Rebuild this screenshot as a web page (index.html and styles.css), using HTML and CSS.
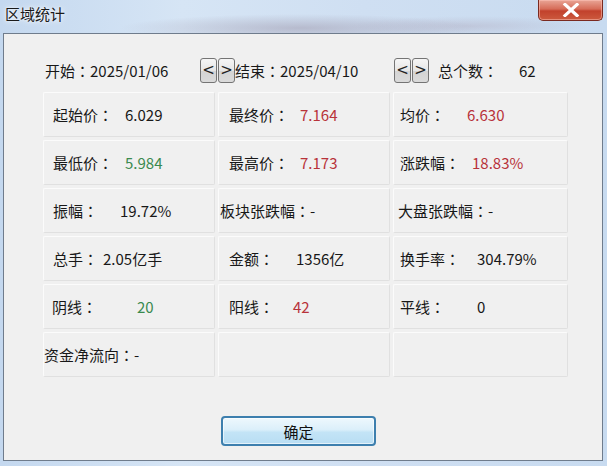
FILE: index.html
```html
<!DOCTYPE html>
<html lang="zh-CN">
<head>
<meta charset="utf-8">
<title>区域统计</title>
<link rel="stylesheet" href="styles.css">
</head>
<body>
<div class="window">
  <div class="titlebar">
    <span class="title">区域统计</span>
    <div class="close" aria-label="关闭">
      <svg width="20" height="14" viewBox="0 0 20 14"><path d="M4 1.5 L16 12.5 M16 1.5 L4 12.5" stroke="#ffffff" stroke-width="3.2" stroke-linecap="square"/></svg>
    </div>
  </div>
  <div class="client">
    <div class="panel">
      <div class="header">
        <span class="h-start">开始<span class="colon" lang="zh-TW">：</span>2025/01/06</span>
        <span class="arrows"><span class="arr">&lt;</span><span class="arr">&gt;</span></span>
        <span class="h-end">结束<span class="colon" lang="zh-TW">：</span>2025/04/10</span>
        <span class="arrows"><span class="arr">&lt;</span><span class="arr">&gt;</span></span>
        <span class="h-count"><span class="h-count-label">总个数<span class="colon" lang="zh-TW">：</span></span><span>62</span></span>
      </div>
      <div class="grid">
        <div class="cell c1"><span class="lbl w72">起始价<span class="colon" lang="zh-TW">：</span></span><span class="val">6.029</span></div>
        <div class="cell c2"><span class="lbl w71">最终价<span class="colon" lang="zh-TW">：</span></span><span class="val red">7.164</span></div>
        <div class="cell c3"><span class="lbl w67">均价<span class="colon" lang="zh-TW">：</span></span><span class="val red">6.630</span></div>

        <div class="cell c1"><span class="lbl w72">最低价<span class="colon" lang="zh-TW">：</span></span><span class="val green">5.984</span></div>
        <div class="cell c2"><span class="lbl w71">最高价<span class="colon" lang="zh-TW">：</span></span><span class="val red">7.173</span></div>
        <div class="cell c3"><span class="lbl w72">涨跌幅<span class="colon" lang="zh-TW">：</span></span><span class="val red">18.83%</span></div>

        <div class="cell c1"><span class="lbl w67">振幅<span class="colon" lang="zh-TW">：</span></span><span class="val">19.72%</span></div>
        <div class="cell c2 tight"><span class="lbl">板块张跌幅<span class="colon" lang="zh-TW">：</span></span><span class="val">-</span></div>
        <div class="cell c3 tight3"><span class="lbl">大盘张跌幅<span class="colon" lang="zh-TW">：</span></span><span class="val">-</span></div>

        <div class="cell c1"><span class="lbl w50">总手<span class="colon" lang="zh-TW">：</span></span><span class="val">2.05亿手</span></div>
        <div class="cell c2"><span class="lbl w67">金额<span class="colon" lang="zh-TW">：</span></span><span class="val">1356亿</span></div>
        <div class="cell c3"><span class="lbl w77">换手率<span class="colon" lang="zh-TW">：</span></span><span class="val">304.79%</span></div>

        <div class="cell c1 c1b"><span class="lbl w85">阴线<span class="colon" lang="zh-TW">：</span></span><span class="val green">20</span></div>
        <div class="cell c2"><span class="lbl w64">阳线<span class="colon" lang="zh-TW">：</span></span><span class="val red">42</span></div>
        <div class="cell c3"><span class="lbl w77">平线<span class="colon" lang="zh-TW">：</span></span><span class="val">0</span></div>

        <div class="cell c1 tight1"><span class="lbl">资金净流向<span class="colon" lang="zh-TW">：</span></span><span class="val">-</span></div>
        <div class="cell c2"></div>
        <div class="cell c3"></div>
      </div>
      <div class="footer">
        <button class="ok" type="button">确定</button>
      </div>
    </div>
  </div>
</div>
</body>
</html>
```

FILE: styles.css
```css
* { box-sizing: border-box; }

html, body {
  margin: 0;
  padding: 0;
}

body {
  width: 607px;
  height: 466px;
  overflow: hidden;
  font-family: "Noto Sans CJK SC", "Noto Sans", sans-serif;
  color: #181818;
}

.window {
  width: 607px;
  height: 466px;
  display: flex;
  flex-direction: column;
  padding: 0 4px 5px 3px;
  background:
    radial-gradient(ellipse 180px 14px at 300px 28px, rgba(150,140,160,0.45), rgba(150,140,160,0) 100%),
    radial-gradient(ellipse 120px 10px at 470px 26px, rgba(170,160,180,0.35), rgba(170,160,180,0) 100%),
    linear-gradient(90deg, #c4d8ef 0%, #d6e5f5 30%, #cfdff2 60%, #c8dbf0 100%);
}

.titlebar {
  height: 33px;
  flex: none;
  display: flex;
  justify-content: space-between;
  align-items: flex-start;
}

.title {
  margin: 4px 0 0 2px;
  font-size: 15px;
  line-height: 20px;
  color: #1a1a1a;
  text-shadow: 0 0 6px rgba(255,255,255,0.9), 0 0 3px rgba(255,255,255,0.9);
}

.close {
  width: 65px;
  height: 21px;
  display: flex;
  align-items: center;
  justify-content: center;
  border: 1px solid #7a2a20;
  border-top: none;
  border-radius: 0 0 5px 5px;
  background: linear-gradient(180deg, #e9a596 0%, #d66c58 45%, #c2412c 55%, #cc5a3e 100%);
  box-shadow: inset 0 0 0 1px rgba(255,200,190,0.5);
}

.client {
  flex: 1;
  border: 1px solid #6f7c8c;
  background: #f0f0f0;
  padding: 24px 0 0 39px;
}

.panel {
  width: 525px;
}

.colon {
  font-family: "Noto Sans CJK TC", "Noto Sans CJK SC", sans-serif;
}

.header {
  height: 25px;
  display: flex;
  align-items: center;
  padding-left: 2px;
  font-size: 15px;
  line-height: 20px;
  white-space: nowrap;
}

.h-start { width: 155px; }
.h-end { width: 159px; }

.arrows {
  display: flex;
  gap: 1px;
  width: 35px;
  height: 25px;
}

.arr {
  width: 17px;
  height: 25px;
  display: flex;
  align-items: center;
  justify-content: center;
  border: 1px solid #747474;
  border-radius: 3px;
  background: linear-gradient(180deg, #f6f6f6 0%, #e6e6e6 50%, #d4d4d4 52%, #dadada 100%);
  font-family: "DejaVu Sans", sans-serif;
  font-size: 15px;
  color: #222;
  line-height: 1;
}

.h-count {
  margin-left: 9px;
  display: flex;
}

.h-count-label { width: 81px; }

.grid {
  margin-top: 9px;
  display: grid;
  grid-template-columns: 172px 172px 175px;
  grid-auto-rows: 45px;
  column-gap: 3px;
  row-gap: 3px;
}

.cell {
  display: flex;
  align-items: center;
  font-size: 15px;
  line-height: 20px;
  white-space: nowrap;
  background: #f0f0f0;
  border: 1px solid;
  border-color: #fbfbfb #e0e0e0 #e0e0e0 #fbfbfb;
  border-radius: 2px;
}

.c1 { padding-left: 9px; }
.c1b { padding-left: 8px; }
.c2 { padding-left: 10px; }
.c3 { padding-left: 6px; }
.tight { padding-left: 1px; }
.tight1 { padding-left: 0; }
.tight3 { padding-left: 4px; }

.lbl { flex: none; }
.w50 { width: 50px; }
.w64 { width: 64px; }
.w67 { width: 67px; }
.w71 { width: 71px; }
.w72 { width: 72px; }
.w77 { width: 77px; }
.w85 { width: 85px; }

.red { color: #b8333a; }
.green { color: #3a8a4f; }

.footer {
  margin-top: 39px;
  padding-left: 178px;
}

.ok {
  width: 155px;
  height: 30px;
  margin: 0;
  padding: 0;
  border: 2px solid #3d7fae;
  border-radius: 4px;
  background: linear-gradient(180deg, #eef8fd 0%, #dbeffa 45%, #c3e4f6 55%, #b8ddf3 100%);
  box-shadow: inset 0 0 0 1px rgba(255,255,255,0.6);
  font-family: "Noto Sans CJK SC", sans-serif;
  font-size: 15px;
  color: #111;
  line-height: 1;
}
```
